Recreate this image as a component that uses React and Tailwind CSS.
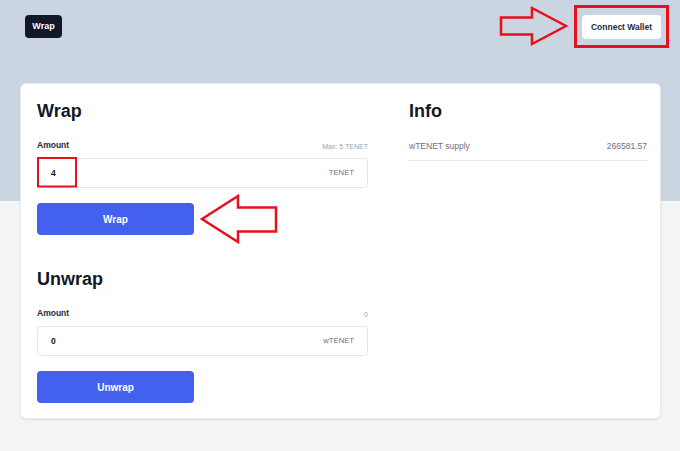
import React from "react";

function Section({ title, max, value, unit, button, className = "" }) {
  return (
    <div className={className}>
      <h2 className="text-[18px] leading-6 font-bold text-[#111827]">{title}</h2>
      <div className="mt-4 flex items-end justify-between h-3">
        <span className="text-[8.5px] leading-3 font-bold text-[#1f2937]">Amount</span>
        <span className="text-[7px] leading-[10px] text-[#9ca3af] -mb-[1px]">{max}</span>
      </div>
      <div className="mt-[7px] h-[30px] flex items-center justify-between border border-[#e5e7eb] rounded-[4px] pl-[13px] pr-[13px]">
        <span className="text-[8.5px] font-bold text-[#111827]">{value}</span>
        <span className="text-[7.7px] text-[#6b7280]">{unit}</span>
      </div>
      <button className="mt-[15px] w-[157px] h-[32px] rounded-[4px] bg-[#4361ee] text-white text-[10px] font-bold">
        {button}
      </button>
    </div>
  );
}

export default function App() {
  return (
    <div
      className="relative w-[680px] h-[451px] bg-[#f3f4f6] overflow-hidden"
      style={{ fontFamily: '"Liberation Sans", Arial, sans-serif' }}
    >
      <div className="h-[201px] bg-[#cbd5e1]">
        <div className="flex items-start justify-between pl-[25px] pr-[19px] pt-[15px]">
          <div className="h-[23px] w-[37px] flex items-center justify-center rounded-[4px] bg-[#111827] text-white text-[9px] font-bold">
            Wrap
          </div>
          <button className="h-[24px] w-[79px] flex items-center justify-center rounded-[4px] bg-white text-[8.5px] font-bold text-[#1f2937]">
            Connect Wallet
          </button>
        </div>
      </div>

      <div className="-mt-[118px] ml-[20px] w-[641px] h-[336px] bg-white rounded-[6px] shadow-[0_1px_2px_rgba(0,0,0,0.08)] border border-[#e8ebef] pl-[16px] pr-[13px] pt-[15px] pb-4 flex gap-[41px]">
        <div className="w-[331px] flex flex-col">
          <Section title="Wrap" max="Max: 5 TENET" value="4" unit="TENET" button="Wrap" />
          <Section
            className="mt-8"
            title="Unwrap"
            max="0"
            value="0"
            unit="wTENET"
            button="Unwrap"
          />
        </div>
        <div className="flex-1">
          <h2 className="text-[18px] leading-6 font-bold text-[#111827]">Info</h2>
          <div className="mt-[17px] flex justify-between items-center pb-2 border-b border-[#e5e7eb] text-[8.5px] leading-3 text-[#6b7280]">
            <span>wTENET supply</span>
            <span>266581.57</span>
          </div>
        </div>
      </div>

      <svg
        className="absolute top-0 left-0 pointer-events-none"
        width="680"
        height="451"
        viewBox="0 0 680 451"
      >
        <g fill="none" stroke="#e8101c" strokeLinejoin="miter">
          <rect x="575.5" y="6.5" width="92" height="40" strokeWidth="3" />
          <path d="M501,17.5 L532,17.5 L532,8 L566,26 L532,44 L532,34.5 L501,34.5 Z" strokeWidth="2.5" />
          <rect x="38" y="158" width="38" height="28.5" strokeWidth="2" />
          <path d="M202,219 L238,196 L238,207.5 L276,207.5 L276,231.5 L238,231.5 L238,242 Z" strokeWidth="2.5" />
        </g>
      </svg>
    </div>
  );
}
